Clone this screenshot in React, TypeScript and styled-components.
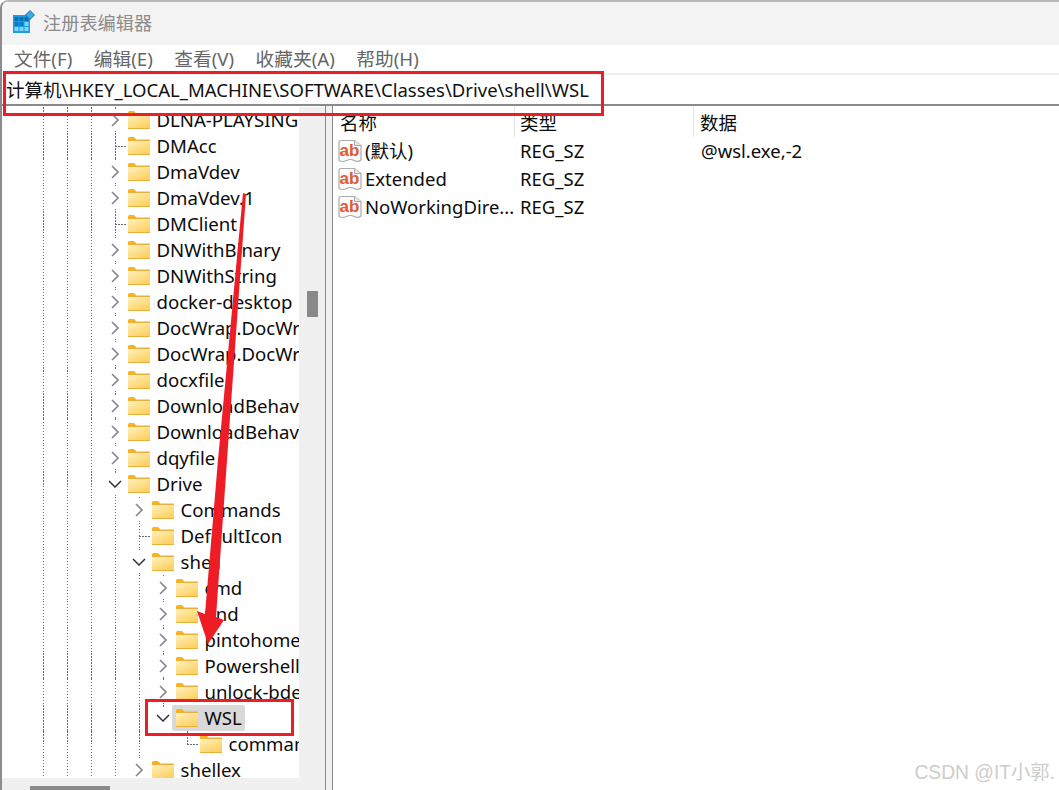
import React from "react";
import { createGlobalStyle } from "styled-components";
import styled from "styled-components";

const UI_FONT = `"Noto Sans", "Noto Sans CJK SC", sans-serif`;
const DOTS = "repeating-linear-gradient(to bottom, #6e6e6e 0 1.5px, transparent 1.5px 3px)";
const H_DOTS = "repeating-linear-gradient(to right, #6e6e6e 0 1.5px, transparent 1.5px 3px)";

const Global = createGlobalStyle`
  html, body { margin: 0; padding: 0; background: #fff; }
  body { font-family: ${UI_FONT}; overflow: hidden; }
`;

const Page = styled.div`
  position: relative;
  width: 1059px;
  height: 790px;
  overflow: hidden;
`;

const Window = styled.div`
  box-sizing: border-box;
  height: 790px;
  display: flex;
  flex-direction: column;
  border-top: 2px solid #b9b9b9;
  border-left: 2px solid #8c8c8c;
  border-top-left-radius: 8px;
  overflow: hidden;
`;

const TitleBar = styled.div`
  box-sizing: border-box;
  height: 43px;
  flex: none;
  background: #f3f3f3;
  display: flex;
  align-items: center;
  gap: 8px;
  padding: 0 0 4px 10px;
  color: #8b8b8b;
  font-size: 18.2px;
`;

const MenuBar = styled.div`
  box-sizing: border-box;
  height: 28px;
  flex: none;
  background: #fff;
  display: flex;
  align-items: center;
  gap: 21.5px;
  padding: 0 0 4px 12px;
  color: #666;
  font-size: 18.7px;
`;

const AddressBar = styled.div`
  box-sizing: border-box;
  height: 33px;
  flex: none;
  border-top: 2px solid #eee;
  border-bottom: 2px solid #8a8a8a;
  display: flex;
  align-items: center;
  padding: 0 0 2px 4px;
  color: #111;
  font-size: 18.55px;
  white-space: nowrap;
`;

const Body = styled.div`
  flex: 1;
  min-height: 0;
  display: flex;
`;

const TreePane = styled.div`
  width: 323px;
  flex: none;
  display: flex;
  flex-direction: column;
`;

const TreeMain = styled.div`
  flex: 1;
  min-height: 0;
  display: flex;
`;

const TreeViewport = styled.div`
  width: 297px;
  flex: none;
  overflow: hidden;
  padding-top: 1px;
`;

const VScroll = styled.div`
  flex: 1;
  background: #f0f0f0;
  margin-top: 1px;
  padding-top: 184px;
  display: flex;
  justify-content: center;
`;

const VThumb = styled.div`
  width: 11px;
  height: 26px;
  background: #8a8a8a;
`;

const HScroll = styled.div`
  height: 12px;
  flex: none;
  background: #f0f0f0;
  display: flex;
  align-items: flex-end;
  padding-left: 28px;
`;

const HThumb = styled.div`
  width: 80px;
  height: 4px;
  background: #8a8a8a;
`;

const Splitter = styled.div`
  box-sizing: border-box;
  width: 8px;
  flex: none;
  background: #f0f0f0;
  border-left: 1px solid #8a8a8a;
  border-right: 1px solid #8a8a8a;
`;

const Row = styled.div`
  height: 26px;
  display: flex;
  align-items: stretch;
  white-space: nowrap;
  font-size: 18.6px;
  color: #0c0c0c;
  padding-left: 29px;
`;

const GuideCell = styled.div<{ $on: boolean }>`
  width: 24px;
  flex: none;
  background: ${(p) => (p.$on ? `${DOTS} center / 1px 100% no-repeat` : "none")};
`;

const LeafCell = styled.div<{ $last?: boolean }>`
  width: 24px;
  flex: none;
  background:
    ${DOTS} center top / 1px ${(p) => (p.$last ? "50%" : "100%")} no-repeat,
    ${H_DOTS} right 1px center / 11px 1px no-repeat;
`;

const ToggleCell = styled.div<{ $line: "full" | "top" }>`
  width: 24px;
  flex: none;
  display: flex;
  align-items: center;
  justify-content: center;
  background: ${DOTS} center top / 1px ${(p) => (p.$line === "top" ? "50%" : "100%")} no-repeat;
`;

const ToggleMask = styled.span`
  display: flex;
  align-items: center;
  justify-content: center;
  width: 14px;
  height: 20px;
  background: #fff;
`;

const Label = styled.div<{ $selected?: boolean }>`
  display: flex;
  align-items: center;
  gap: 6.5px;
  margin-left: -3px;
  padding: 0 3px 0 4px;
  border-radius: 2px;
  background: ${(p) => (p.$selected ? "#d9d9d9" : "transparent")};
`;

const RowText = styled.span`
  padding-bottom: 2px;
`;

const ListPane = styled.div`
  flex: 1;
  min-width: 0;
  background: #fff;
  font-size: 18.5px;
  color: #0c0c0c;
`;

const ListGrid = styled.div`
  display: grid;
  grid-template-columns: 182px 179px 1fr;
`;

const HeadCell = styled.div<{ $pad: number; $divider?: boolean }>`
  box-sizing: border-box;
  height: 31px;
  padding: 1px 0 0 ${(p) => p.$pad}px;
  display: flex;
  align-items: center;
  border-right: ${(p) => (p.$divider ? "1.5px solid #e3e3e3" : "0")};
`;

const ListCell = styled.div<{ $pad: number }>`
  height: 28px;
  display: flex;
  align-items: center;
  padding-left: ${(p) => p.$pad}px;
  white-space: nowrap;
  overflow: hidden;
`;

const NameCell = styled(ListCell)`
  gap: 3px;
`;

const Annotation = styled.div<{ $x: number; $y: number; $w: number; $h: number }>`
  position: absolute;
  box-sizing: border-box;
  left: ${(p) => p.$x}px;
  top: ${(p) => p.$y}px;
  width: ${(p) => p.$w}px;
  height: ${(p) => p.$h}px;
  border: 3px solid #ee1c25;
`;

const Arrow = styled.svg`
  position: absolute;
  left: 0;
  top: 0;
`;

const Watermark = styled.div`
  position: absolute;
  right: 4px;
  bottom: 5px;
  font-family: "Liberation Sans", "Noto Sans CJK SC", sans-serif;
  font-size: 19.3px;
  color: #cdcdcd;
  white-space: nowrap;
`;

const AppIcon = () => (
  <svg width="23" height="24" viewBox="0 0 23 24">
    <rect x="1" y="5" width="17" height="18" fill="#1b9de2" />
    <g fill="#7fd4fa">
      <rect x="2.5" y="7" width="4" height="4" fill="#0b6fb8" />
      <rect x="7.5" y="7" width="4" height="4" fill="#0b6fb8" />
      <rect x="12.5" y="7" width="4" height="4" fill="#0b6fb8" />
      <rect x="2.5" y="12" width="4" height="4" fill="#0b7cc6" />
      <rect x="7.5" y="12" width="4" height="4" fill="#0b7cc6" />
      <rect x="12.5" y="12" width="4" height="4" />
      <rect x="2.5" y="17" width="4" height="4" />
      <rect x="7.5" y="17" width="4" height="4" />
      <rect x="12.5" y="17" width="4" height="4" />
    </g>
    <path d="M18 0.5 L22.5 5 L18 9.5 L13.5 5 Z" fill="#3fa9e0" stroke="#1478b8" />
  </svg>
);

const Folder = () => (
  <svg width="22" height="18" viewBox="0 0 22 18" style={{ flex: "none" }}>
    <defs>
      <linearGradient id="folderBody" x1="0" y1="0" x2="0.7" y2="1">
        <stop offset="0" stopColor="#fff1bd" />
        <stop offset="1" stopColor="#fdd162" />
      </linearGradient>
    </defs>
    <path d="M0 1.5 Q0 0 1.5 0 H6 L8 2 V5 H0 Z" fill="#f9b516" />
    <rect x="0" y="2.5" width="22" height="15.5" rx="0.5" fill="#e9b13a" />
    <rect x="0" y="4" width="22" height="13" fill="url(#folderBody)" />
  </svg>
);

const ChevronClosed = () => (
  <svg width="8" height="14" viewBox="0 0 8 14">
    <path d="M1 1 L7 7 L1 13" fill="none" stroke="#8b8b8b" strokeWidth="1.7" />
  </svg>
);

const ChevronOpen = () => (
  <svg width="14" height="8" viewBox="0 0 14 8">
    <path d="M1 1 L7 7 L13 1" fill="none" stroke="#333" strokeWidth="1.5" />
  </svg>
);

const ValueIcon = () => (
  <svg width="24" height="24" viewBox="0 0 24 24" style={{ flex: "none" }}>
    <path
      d="M1 3.5 Q1 1.5 3 1.5 H16.5 L23 6.5 V21 Q19.5 23.5 16 21.5 T8.5 21.5 T1 21.5 Z"
      fill="#fbfbfb"
      stroke="#ababab"
      strokeWidth="1.2"
    />
    <path d="M16.5 1.5 V6.5 H23" fill="#e8e8e8" stroke="#ababab" />
    <text
      x="11.5"
      y="16.5"
      textAnchor="middle"
      fontFamily="Liberation Sans, sans-serif"
      fontWeight="700"
      fontSize="17"
      fill="#df5a3a"
    >
      ab
    </text>
  </svg>
);

type Kind = "closed" | "open" | "leaf" | "lastLeaf";

interface Node {
  name: string;
  level: number;
  kind: Kind;
  selected?: boolean;
  last?: boolean;
  skipParentGuide?: boolean;
}

const nodes: Node[] = [
  { name: "DLNA-PLAYSINGLE", level: 0, kind: "closed" },
  { name: "DMAcc", level: 0, kind: "leaf" },
  { name: "DmaVdev", level: 0, kind: "closed" },
  { name: "DmaVdev.1", level: 0, kind: "closed" },
  { name: "DMClient", level: 0, kind: "leaf" },
  { name: "DNWithBinary", level: 0, kind: "closed" },
  { name: "DNWithString", level: 0, kind: "closed" },
  { name: "docker-desktop", level: 0, kind: "closed" },
  { name: "DocWrap.DocWrapper", level: 0, kind: "closed" },
  { name: "DocWrap.DocWrapper.1", level: 0, kind: "closed" },
  { name: "docxfile", level: 0, kind: "closed" },
  { name: "DownloadBehavior", level: 0, kind: "closed" },
  { name: "DownloadBehavior.1", level: 0, kind: "closed" },
  { name: "dqyfile", level: 0, kind: "closed" },
  { name: "Drive", level: 0, kind: "open" },
  { name: "Commands", level: 1, kind: "closed" },
  { name: "DefaultIcon", level: 1, kind: "leaf" },
  { name: "shell", level: 1, kind: "open" },
  { name: "cmd", level: 2, kind: "closed" },
  { name: "find", level: 2, kind: "closed" },
  { name: "pintohome", level: 2, kind: "closed" },
  { name: "Powershell", level: 2, kind: "closed" },
  { name: "unlock-bde", level: 2, kind: "closed" },
  { name: "WSL", level: 2, kind: "open", selected: true, last: true },
  { name: "command", level: 3, kind: "lastLeaf", skipParentGuide: true },
  { name: "shellex", level: 1, kind: "closed", last: true },
];

const TreeRow = ({ node }: { node: Node }) => {
  const guides: boolean[] = [true, true, true];
  for (let i = 0; i < node.level; i++) {
    guides.push(!(node.skipParentGuide && i === node.level - 1));
  }
  return (
    <Row>
      {guides.map((on, i) => (
        <GuideCell key={i} $on={on} />
      ))}
      {node.kind === "leaf" && <LeafCell />}
      {node.kind === "lastLeaf" && <LeafCell $last />}
      {node.kind === "closed" && (
        <ToggleCell $line={node.last ? "top" : "full"}>
          <ToggleMask>
            <ChevronClosed />
          </ToggleMask>
        </ToggleCell>
      )}
      {node.kind === "open" && (
        <ToggleCell $line={node.last ? "top" : "full"}>
          <ToggleMask>
            <ChevronOpen />
          </ToggleMask>
        </ToggleCell>
      )}
      <Label $selected={node.selected}>
        <Folder />
        <RowText>{node.name}</RowText>
      </Label>
    </Row>
  );
};

const menus = ["文件(F)", "编辑(E)", "查看(V)", "收藏夹(A)", "帮助(H)"];

const values = [
  ["(默认)", "REG_SZ", "@wsl.exe,-2"],
  ["Extended", "REG_SZ", ""],
  ["NoWorkingDire...", "REG_SZ", ""],
];

export default function App() {
  return (
    <Page>
      <Global />
      <Window>
        <TitleBar>
          <AppIcon />
          注册表编辑器
        </TitleBar>
        <MenuBar>
          {menus.map((m) => (
            <span key={m}>{m}</span>
          ))}
        </MenuBar>
        <AddressBar>计算机\HKEY_LOCAL_MACHINE\SOFTWARE\Classes\Drive\shell\WSL</AddressBar>
        <Body>
          <TreePane>
            <TreeMain>
              <TreeViewport>
                {nodes.map((n) => (
                  <TreeRow key={n.name} node={n} />
                ))}
              </TreeViewport>
              <VScroll>
                <VThumb />
              </VScroll>
            </TreeMain>
            <HScroll>
              <HThumb />
            </HScroll>
          </TreePane>
          <Splitter />
          <ListPane>
            <ListGrid>
              <HeadCell $pad={7} $divider>名称</HeadCell>
              <HeadCell $pad={5} $divider>类型</HeadCell>
              <HeadCell $pad={6}>数据</HeadCell>
              {values.map((v) => (
                <React.Fragment key={v[0]}>
                  <NameCell $pad={5}>
                    <ValueIcon />
                    <RowText>{v[0]}</RowText>
                  </NameCell>
                  <ListCell $pad={5}><RowText>{v[1]}</RowText></ListCell>
                  <ListCell $pad={7}><RowText>{v[2]}</RowText></ListCell>
                </React.Fragment>
              ))}
            </ListGrid>
          </ListPane>
        </Body>
      </Window>
      <Arrow width="1059" height="790" viewBox="0 0 1059 790">
        <polygon
          points="243,193 246,194 227,460 216,617 224,620 208,644 197,611 205,614 218,460"
          fill="#ee1c25"
        />
      </Arrow>
      <Annotation $x={3} $y={71} $w={601} $h={45} />
      <Annotation $x={145} $y={699} $w={149} $h={37} />
      <Watermark>CSDN @IT小郭.</Watermark>
    </Page>
  );
}
